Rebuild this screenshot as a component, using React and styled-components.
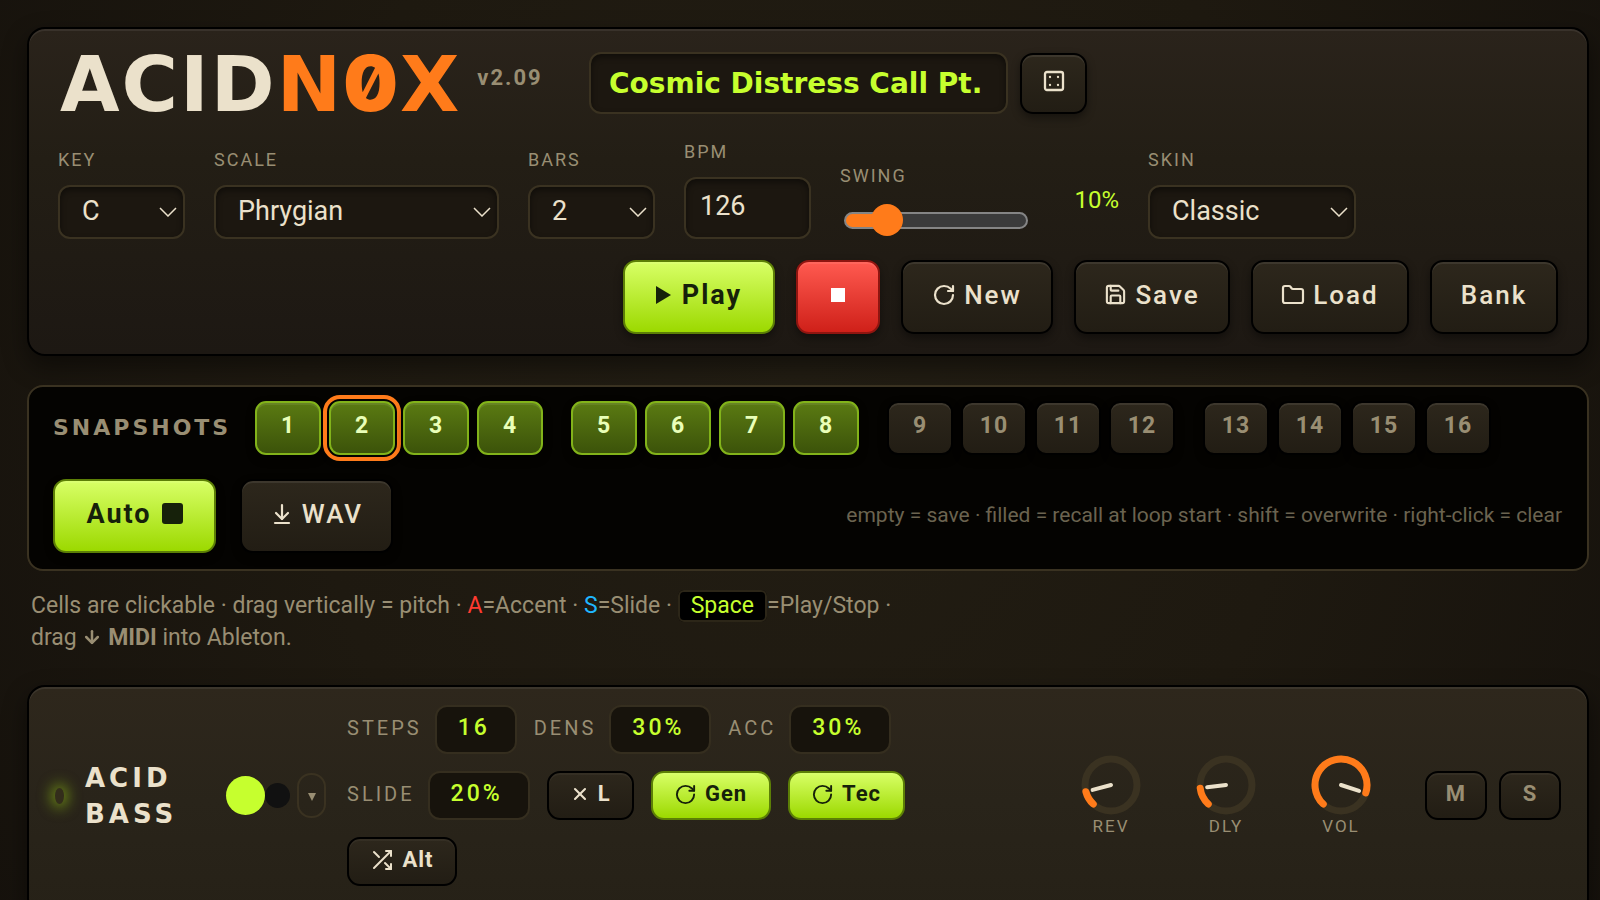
import React, { useState } from "react";
import styled, { createGlobalStyle, css } from "styled-components";
import { RotateCw, Save, Folder, X, ArrowDownToLine, ArrowDown, Dice4 } from "lucide-react";
import { FiShuffle } from "react-icons/fi";

const c = {
  text: "#ebe1cb",
  muted: "#998e73",
  faint: "#6b6350",
  lime: "#c6ff2e",
  orange: "#ff7b1a",
  red: "#ff3b30",
  blue: "#1fb6ff",
  line: "#3a3221",
  field: "#1c1710",
  dark: "#16210a",
};
const display = `"DejaVu Sans", sans-serif`;
const body = `Roboto, "Noto Sans", sans-serif`;

const GlobalStyle = createGlobalStyle`
  *, *::before, *::after { box-sizing: border-box; }
  html { scrollbar-width: none; background: #15110c; }
  body { margin: 0; font-family: ${body}; color: ${c.text}; }
  button, input, select { font: inherit; color: inherit; }
`;

const Shell = styled.main`
  min-height: 100vh;
  padding: 27px 11px 0 27px;
  background: radial-gradient(ellipse 62% 130% at 50% 40%, #221d13 0%, #1e1910 50%, #15110c 100%);
`;

const panelBox = css`
  border: 2px solid #000;
  border-radius: 18px;
  box-shadow: inset 0 2px 0 rgba(255, 255, 255, 0.07), 0 10px 24px rgba(0, 0, 0, 0.45);
`;

const Header = styled.header`
  ${panelBox}
  padding: 23px 29px 20px;
  background: linear-gradient(#2a231b, #231e15 40%, #1d1813);
`;

const TitleRow = styled.div`
  display: flex;
  align-items: center;
  gap: 12px;
`;

const Brand = styled.div`
  flex: 0 0 519px;
  display: flex;
  align-items: flex-start;
  gap: 16px;
  height: 62px;
  padding-left: 2px;
`;

const Logo = styled.h1`
  margin: 0;
  font: 700 77px/62px ${display};
  letter-spacing: 2px;
  white-space: nowrap;
`;

const LogoAccent = styled.span`
  color: ${c.orange};
`;

const SlashedZero = styled.span`
  font-family: Inter, ${display};
  font-weight: 900;
  font-feature-settings: "zero";
`;

const Version = styled.span`
  padding-top: 14px;
  font-size: 22px;
  line-height: 24px;
  font-weight: 700;
  letter-spacing: 2px;
  color: ${c.muted};
`;

const fieldBox = css`
  border: 2px solid ${c.line};
  border-radius: 12px;
  background: ${c.field};
  box-shadow: inset 0 3px 6px rgba(0, 0, 0, 0.45);
`;

const NameInput = styled.input`
  ${fieldBox}
  flex: 0 1 419px;
  min-width: 0;
  height: 62px;
  padding: 0 18px;
  font: 700 28px/36px ${display};
  color: ${c.lime};
`;

const tones = {
  dark: css`
    border-color: #000;
    background: linear-gradient(#2d271c, #221d14);
    color: ${c.text};
  `,
  lime: css`
    border-color: #5c7f06;
    background: linear-gradient(#d8ff66, #9cd900);
    color: ${c.dark};
  `,
  red: css`
    border-color: #8f1510;
    background: linear-gradient(#ff5a50, #cf2019);
    color: #fff;
  `,
  filled: css`
    border-color: #82b31a;
    background: linear-gradient(#5a7a12, #3c530a);
    color: #e9ffb8;
  `,
};

const Button = styled.button`
  display: inline-flex;
  align-items: center;
  justify-content: center;
  gap: 8px;
  flex: none;
  width: ${(p) => p.$w}px;
  height: 74px;
  padding: 0 0 5px;
  border: 2px solid;
  border-radius: 13px;
  font-size: 26px;
  line-height: 30px;
  font-weight: ${(p) => (p.$bold ? 700 : 500)};
  letter-spacing: 2px;
  box-shadow: inset 0 2px 0 rgba(255, 255, 255, 0.08), 0 4px 8px rgba(0, 0, 0, 0.4);
  ${(p) => tones[p.$tone || "dark"]}
`;

const PrimaryButton = styled(Button)`
  gap: 10px;
  font-size: 27px;
`;

const DiceButton = styled(Button)`
  height: 61px;
  padding: 0 0 4px;
`;

const Controls = styled.div`
  display: flex;
  flex-wrap: wrap;
  align-items: flex-end;
  gap: 29px;
  margin-top: 27px;
`;

const Field = styled.div`
  display: flex;
  flex-direction: column;
  gap: 14px;
  width: ${(p) => p.$w}px;
`;

const Label = styled.label`
  font-size: 18px;
  line-height: 22px;
  letter-spacing: 2px;
  text-transform: uppercase;
  color: ${c.muted};
`;

const SelectWrap = styled.div`
  display: grid;
  align-items: center;
  > * { grid-area: 1 / 1; }
  svg { justify-self: end; margin-right: 8px; pointer-events: none; }
`;

const Select = styled.select`
  ${fieldBox}
  appearance: none;
  width: 100%;
  height: 54px;
  padding: 0 32px 3px 22px;
  font-size: 27px;
`;

const BpmInput = styled.input`
  ${fieldBox}
  width: 100%;
  height: 62px;
  padding: 0 14px 4px;
  font-size: 27px;
  appearance: textfield;
  &::-webkit-inner-spin-button { display: none; }
`;

const Swing = styled.div`
  display: flex;
  align-items: center;
  justify-content: space-between;
  width: 279px;
`;

const SwingValue = styled.output`
  padding-bottom: 4px;
  font-size: 24px;
  line-height: 26px;
  color: ${c.lime};
`;

const Range = styled.input`
  appearance: none;
  width: 184px;
  height: 38px;
  margin: 0 4px;
  background: transparent;
  &::-webkit-slider-runnable-track {
    height: 17px;
    border: 2px solid #858585;
    border-radius: 9px;
    background: linear-gradient(90deg, ${c.orange} 20%, #3b3b3b 20%);
  }
  &::-webkit-slider-thumb {
    appearance: none;
    width: 32px;
    height: 32px;
    margin-top: -10px;
    border-radius: 50%;
    background: ${c.orange};
  }
`;

const Transport = styled.div`
  display: flex;
  flex-wrap: wrap;
  justify-content: flex-end;
  gap: 21px;
  margin-top: 21px;
`;

const Snapshots = styled.section`
  margin-top: 29px;
  padding: 14px 25px 16px 24px;
  border: 2px solid ${c.line};
  border-radius: 16px;
  background: #040301;
`;

const SnapRow = styled.div`
  display: flex;
  align-items: center;
`;

const SnapTitle = styled.h2`
  flex: 0 0 202px;
  margin: 0;
  font: 700 22px/24px ${display};
  letter-spacing: 3px;
  color: ${c.muted};
`;

const SnapBanks = styled.div`
  display: flex;
  flex-wrap: wrap;
  gap: 28px;
`;

const SnapBank = styled.div`
  display: flex;
  gap: 8px;
`;

const SnapButton = styled(Button)`
  width: 66px;
  height: 54px;
  border-radius: 11px;
  font-size: 23px;
  line-height: 26px;
  letter-spacing: 1px;
  ${(p) => !p.$tone && css`color: ${c.muted};`}
  ${(p) => p.$active && css`outline: 4px solid ${c.orange}; outline-offset: 2px;`}
`;

const SnapActions = styled.div`
  display: flex;
  align-items: center;
  gap: 24px;
  margin-top: 24px;
`;

const Hint = styled.p`
  margin: 0 0 2px auto;
  font-size: 21px;
  line-height: 26px;
  color: ${c.faint};
`;

const Help = styled.p`
  max-width: 890px;
  margin: 19px 4px 31px;
  font-size: 23px;
  line-height: 32px;
  color: ${c.muted};
  svg { vertical-align: -2px; }
`;

const Mark = styled.span`
  color: ${(p) => p.$color};
`;

const Kbd = styled.kbd`
  padding: 0 11px 1px;
  border: 2px solid #2c2618;
  border-radius: 6px;
  background: #000;
  font: inherit;
  color: ${c.lime};
`;

const Track = styled.section`
  ${panelBox}
  display: flex;
  align-items: center;
  padding: 18px 26px 29px 26px;
  background: linear-gradient(#2e271c, #29241a 50%, #262117);
`;

const Led = styled.span`
  flex: none;
  width: 9px;
  height: 16px;
  border-radius: 50%;
  background: #332d1b;
  box-shadow: 0 0 14px 4px rgba(150, 200, 20, 0.6);
`;

const TrackName = styled.h2`
  flex: 0 0 141px;
  margin: 0 0 0 21px;
  padding-right: 30px;
  font: 700 26px/36px ${display};
  letter-spacing: 4px;
`;

const Swatch = styled.button`
  flex: none;
  width: ${(p) => p.$size}px;
  height: ${(p) => p.$size}px;
  padding: 0;
  border: 0;
  border-radius: 50%;
  background: ${(p) => p.$color};
`;

const MoreButton = styled.button`
  flex: none;
  width: 29px;
  height: 45px;
  margin: 0 21px 0 7px;
  padding: 0;
  border: 2px solid ${c.line};
  border-radius: 14px;
  background: transparent;
  color: ${c.muted};
`;

const Params = styled.div`
  flex: 0 1 570px;
  display: flex;
  flex-wrap: wrap;
  gap: 17px;
`;

const Param = styled.div`
  display: flex;
  align-items: center;
  gap: 13px;
`;

const ParamLabel = styled.label`
  padding-bottom: 3px;
  font-size: 20px;
  line-height: 24px;
  letter-spacing: 3px;
  color: ${c.muted};
`;

const ParamInput = styled.input`
  width: ${(p) => p.$w}px;
  height: 49px;
  padding: 0 0 4px 21px;
  border: 2px solid #352e1f;
  border-radius: 12px;
  background: #17130c;
  font-size: 23px;
  font-weight: 500;
  letter-spacing: 3px;
  color: ${c.lime};
`;

const SmallButton = styled(Button)`
  height: 49px;
  padding: 0 0 3px;
  font-size: 22px;
  line-height: 26px;
  letter-spacing: 1px;
  box-shadow: inset 0 2px 0 rgba(255, 255, 255, 0.04);
  ${(p) => p.$muted && css`color: ${c.muted};`}
`;

const Knobs = styled.div`
  display: flex;
  gap: 55px;
  margin: 0 54px 0 auto;
`;

const KnobBox = styled.div`
  display: flex;
  flex-direction: column;
  align-items: center;
  font-size: 17px;
  line-height: 22px;
  letter-spacing: 2px;
  color: ${c.muted};
`;

const MuteSolo = styled.div`
  display: flex;
  gap: 12px;
`;

const Chevron = () => (
  <svg width="18" height="10" viewBox="0 0 18 10" fill="none" stroke={c.text} strokeWidth="1.5" aria-hidden="true">
    <path d="M1 1l8 8 8-8" />
  </svg>
);

const Glyph = ({ w = 20, h = 20, children }) => (
  <svg width={w} height={h} viewBox={`0 0 ${w} ${h}`} fill="currentColor" aria-hidden="true">{children}</svg>
);

function point(angle, r) {
  const a = ((angle - 90) * Math.PI) / 180;
  return `${(30 + r * Math.cos(a)).toFixed(2)} ${(30 + r * Math.sin(a)).toFixed(2)}`;
}

function Knob({ label, angle }) {
  const large = angle + 135 > 180 ? 1 : 0;
  return (
    <KnobBox role="img" aria-label={label}>
      <svg width="60" height="60" viewBox="0 0 60 60" fill="none" strokeLinecap="round">
        <circle cx="30" cy="30" r="26" stroke={c.line} strokeWidth="7" />
        <path d={`M${point(-137, 26)} A26 26 0 ${large} 1 ${point(angle, 26)}`} stroke={c.orange} strokeWidth="7" />
        <path d={`M30 30 L${point(angle, 19)}`} stroke={c.text} strokeWidth="4" />
      </svg>
      <span>{label}</span>
    </KnobBox>
  );
}

function SelectField({ id, label, w, options }) {
  return (
    <Field $w={w}>
      <Label htmlFor={id}>{label}</Label>
      <SelectWrap>
        <Select id={id}>{options.map((o) => <option key={o}>{o}</option>)}</Select>
        <Chevron />
      </SelectWrap>
    </Field>
  );
}

function ParamField({ id, label, value, w }) {
  return (
    <Param>
      <ParamLabel htmlFor={id}>{label}</ParamLabel>
      <ParamInput id={id} $w={w} defaultValue={value} />
    </Param>
  );
}

const banks = [[1, 2, 3, 4], [5, 6, 7, 8], [9, 10, 11, 12], [13, 14, 15, 16]];

export default function App() {
  const [active, setActive] = useState(2);
  const [swing, setSwing] = useState(10);
  return (
    <>
      <GlobalStyle />
      <Shell>
        <Header>
          <TitleRow>
            <Brand>
              <Logo>ACID<LogoAccent>N<SlashedZero>0</SlashedZero>X</LogoAccent></Logo>
              <Version>v2.09</Version>
            </Brand>
            <NameInput aria-label="Track name" defaultValue="Cosmic Distress Call Pt." />
            <DiceButton $w={67} aria-label="Random name"><Dice4 size={24} strokeWidth={2.3} /></DiceButton>
          </TitleRow>
          <Controls>
            <SelectField id="key" label="Key" w={127} options={["C", "D", "E"]} />
            <SelectField id="scale" label="Scale" w={285} options={["Phrygian", "Minor"]} />
            <SelectField id="bars" label="Bars" w={127} options={["2", "4"]} />
            <Field $w={127}>
              <Label htmlFor="bpm">BPM</Label>
              <BpmInput id="bpm" type="number" defaultValue="126" />
            </Field>
            <Swing>
              <Field $w={192}>
                <Label htmlFor="swing">Swing</Label>
                <Range id="swing" type="range" min="0" max="60" value={swing} onChange={(e) => setSwing(+e.target.value)} />
              </Field>
              <SwingValue htmlFor="swing">{swing}%</SwingValue>
            </Swing>
            <SelectField id="skin" label="Skin" w={208} options={["Classic", "Night"]} />
          </Controls>
          <Transport>
            <PrimaryButton $tone="lime" $bold $w={152}>
              <Glyph w={16} h={18}><path d="M0 0l15 9-15 9z" /></Glyph>Play
            </PrimaryButton>
            <Button $tone="red" $w={84} aria-label="Stop"><Glyph w={14} h={14}><path d="M0 0h14v14H0z" /></Glyph></Button>
            <Button $w={152}><RotateCw size={24} strokeWidth={2.2} />New</Button>
            <Button $w={156}><Save size={23} strokeWidth={2.2} />Save</Button>
            <Button $w={158}><Folder size={24} strokeWidth={2.2} />Load</Button>
            <Button $w={128}>Bank</Button>
          </Transport>
        </Header>

        <Snapshots>
          <SnapRow>
            <SnapTitle>SNAPSHOTS</SnapTitle>
            <SnapBanks>
              {banks.map((bank) => (
                <SnapBank key={bank[0]}>
                  {bank.map((n) => (
                    <SnapButton key={n} $bold $tone={n <= 8 ? "filled" : undefined} $active={n === active} onClick={() => setActive(n)}>{n}</SnapButton>
                  ))}
                </SnapBank>
              ))}
            </SnapBanks>
          </SnapRow>
          <SnapActions>
            <PrimaryButton $tone="lime" $bold $w={163}>Auto <Glyph w={21} h={21}><rect width="21" height="21" rx="3" /></Glyph></PrimaryButton>
            <Button $w={153}><ArrowDownToLine size={24} strokeWidth={2.2} />WAV</Button>
            <Hint>empty = save · filled = recall at loop start · shift = overwrite · right-click = clear</Hint>
          </SnapActions>
        </Snapshots>

        <Help>
          Cells are clickable · drag vertically = pitch · <Mark $color={c.red}>A</Mark>=Accent · <Mark $color={c.blue}>S</Mark>=Slide · <Kbd>Space</Kbd>=Play/Stop ·
          {" "}drag <ArrowDown size={20} strokeWidth={3} /> <b>MIDI</b> into Ableton.
        </Help>

        <Track>
          <Led />
          <TrackName>ACID BASS</TrackName>
          <Swatch $size={39} $color={c.lime} aria-label="Colour" />
          <Swatch $size={25} $color="#111" aria-label="Second colour" />
          <MoreButton aria-label="More"><Glyph w={8} h={8}><path d="M0 0h8L4 8z" /></Glyph></MoreButton>
          <Params>
            <ParamField id="steps" label="STEPS" value="16" w={82} />
            <ParamField id="dens" label="DENS" value="30%" w={102} />
            <ParamField id="acc" label="ACC" value="30%" w={102} />
            <ParamField id="slide" label="SLIDE" value="20%" w={102} />
            <SmallButton $w={87} $bold><X size={20} strokeWidth={2.5} />L</SmallButton>
            <SmallButton $w={120} $tone="lime" $bold><RotateCw size={23} strokeWidth={2} />Gen</SmallButton>
            <SmallButton $w={117} $tone="lime" $bold><RotateCw size={23} strokeWidth={2} />Tec</SmallButton>
            <SmallButton $w={110} $bold><FiShuffle size={24} />Alt</SmallButton>
          </Params>
          <Knobs>
            <Knob label="REV" angle={-105} />
            <Knob label="DLY" angle={-97} />
            <Knob label="VOL" angle={108} />
          </Knobs>
          <MuteSolo>
            <SmallButton $w={62} $bold $muted aria-label="Mute">M</SmallButton>
            <SmallButton $w={62} $bold $muted aria-label="Solo">S</SmallButton>
          </MuteSolo>
        </Track>
      </Shell>
    </>
  );
}
